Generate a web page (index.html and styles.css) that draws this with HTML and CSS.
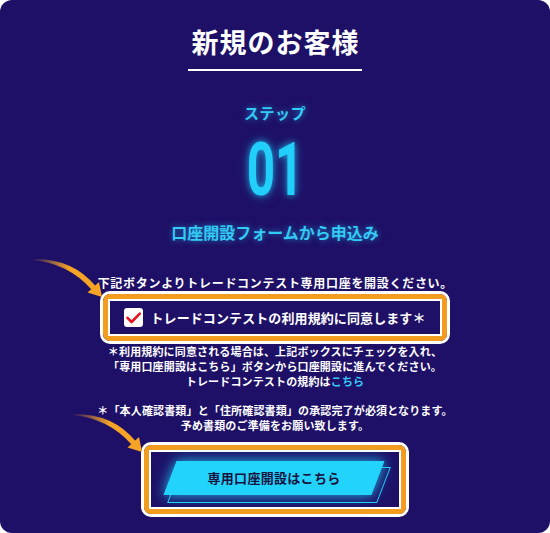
FILE: index.html
```html
<!DOCTYPE html>
<html lang="ja">
<head>
<meta charset="utf-8">
<title>新規のお客様</title>
<link rel="stylesheet" href="styles.css">
</head>
<body>
<div class="card">
  <h1 class="title">新規のお客様</h1>
  <div class="rule"></div>
  <p class="step-label">ステップ</p>
  <p class="step-num"><span>01</span></p>
  <p class="step-title">口座開設フォームから申込み</p>
  <p class="lead">下記ボタンよりトレードコンテスト専用口座を開設ください。</p>
  <div class="frame frame-agree">
    <div class="frame-orange">
      <div class="frame-inner agree">
        <span class="checkbox"><svg viewBox="0 0 19 19" width="19" height="19"><path d="M3.5 9.8 L7.6 14 L15.8 5.6" fill="none" stroke="#e8141f" stroke-width="2.6" stroke-linecap="round" stroke-linejoin="round"/></svg></span>
        <span class="agree-text">トレードコンテストの利用規約に同意します＊</span>
      </div>
    </div>
  </div>
  <p class="note">＊利用規約に同意される場合は、上記ボックスにチェックを入れ、<br>「専用口座開設はこちら」ボタンから口座開設に進んでください。<br>トレードコンテストの規約は<a class="link" href="#">こちら</a></p>
  <p class="note note-2">＊「本人確認書類」と「住所確認書類」の承認完了が必須となります。<br>予め書類のご準備をお願い致します。</p>
  <div class="frame frame-cta">
    <div class="frame-orange">
      <div class="frame-inner cta-wrap">
        <a class="cta" href="#"><span class="cta-text">専用口座開設はこちら</span></a>
      </div>
    </div>
  </div>

  <svg class="arrow arrow-1" viewBox="0 0 80 48" width="80" height="48">
    <defs>
      <linearGradient id="ag1" x1="0" y1="0" x2="1" y2="0">
        <stop offset="0" stop-color="#f6a326" stop-opacity="0"/>
        <stop offset="0.6" stop-color="#f6a326" stop-opacity="1"/>
      </linearGradient>
    </defs>
    <path d="M3 4 Q44 2.5 67.5 31 L63.5 34.5 Q40 8 3 4.8 Z" fill="url(#ag1)"/>
    <polygon points="74,42 59.5,37.5 71,27" fill="#f6a326"/>
  </svg>
  <svg class="arrow arrow-2" viewBox="0 0 80 48" width="80" height="48">
    <defs>
      <linearGradient id="ag2" x1="0" y1="0" x2="1" y2="0">
        <stop offset="0" stop-color="#f6a326" stop-opacity="0"/>
        <stop offset="0.6" stop-color="#f6a326" stop-opacity="1"/>
      </linearGradient>
    </defs>
    <path d="M3 4 Q44 2.5 67.5 31 L63.5 34.5 Q40 8 3 4.8 Z" fill="url(#ag2)"/>
    <polygon points="74,42 59.5,37.5 71,27" fill="#f6a326"/>
  </svg>
</div>
</body>
</html>
```

FILE: styles.css
```css
* { box-sizing: border-box; }
html, body { margin: 0; padding: 0; background: #ffffff; }
body {
  font-family: "Noto Sans CJK JP", "Noto Sans", sans-serif;
  font-weight: 700;
}
.card {
  position: relative;
  width: 550px;
  height: 533px;
  background: #1e1066;
  border-radius: 12px;
  overflow: hidden;
  display: flex;
  flex-direction: column;
  align-items: center;
  color: #ffffff;
}
.title {
  margin: 24px 0 0;
  font-size: 27px;
  line-height: 36px;
  font-weight: 700;
  letter-spacing: 1px;
  padding-left: 1px;
}
.rule {
  width: 174px;
  height: 2px;
  margin-top: 9px;
  background: #ffffff;
}
.step-label {
  margin: 32px 0 0;
  font-size: 15px;
  line-height: 20px;
  letter-spacing: 0.5px;
  color: #33caf5;
  text-shadow: 0 0 6px rgba(40, 200, 245, 0.6);
}
.step-num {
  margin: 16px 0 0;
  height: 60px;
  line-height: 60px;
  font-family: "Roboto", "Liberation Sans", sans-serif;
  font-size: 75px;
  font-weight: 700;
  color: #22cffa;
}
.step-num span {
  display: inline-block;
  transform: scaleX(0.66);
  text-shadow: 0 0 8px rgba(34, 207, 250, 0.75), 0 0 16px rgba(34, 207, 250, 0.35);
}
.step-title {
  margin: 22px 0 0;
  font-size: 16px;
  line-height: 22px;
  color: #33caf5;
  text-shadow: 0 0 6px rgba(40, 200, 245, 0.6);
}
.lead {
  margin: 32px 0 0;
  font-size: 12px;
  line-height: 16px;
  letter-spacing: 0.7px;
  padding-left: 0.7px;
}
.frame {
  border: 3px solid #ffffff;
  border-radius: 10px;
}
.frame-orange {
  border: 5px solid #f39d20;
  border-radius: 7px;
  background: #f39d20;
}
.frame-inner {
  border: 2px solid #ffffff;
  background: #1e1066;
}
.frame-agree { width: 350px; height: 53px; }
.frame-agree .frame-orange, .frame-cta .frame-orange { height: 100%; }
.agree {
  height: 100%;
  display: flex;
  align-items: center;
  justify-content: center;
  gap: 7px;
}
.checkbox {
  width: 19px;
  height: 19px;
  background: #ffffff;
  border-radius: 3px;
  display: flex;
}
.agree-text {
  font-size: 13px;
  line-height: 19px;
  letter-spacing: 0.1px;
}
.note {
  margin: 0;
  font-size: 11px;
  line-height: 15px;
  text-align: center;
  letter-spacing: 0.15px;
}
.note-2 { margin-top: 14px; }
.link { color: #33caf5; text-decoration: none; }
.frame-cta {
  width: 268px;
  height: 75px;
  margin-top: 9px;
}
.cta-wrap {
  height: 100%;
  display: flex;
  align-items: center;
  justify-content: center;
  padding-bottom: 4px;
  padding-right: 2px;
}
.cta {
  position: relative;
  width: 208px;
  height: 34px;
  display: flex;
  align-items: center;
  justify-content: center;
  text-decoration: none;
  z-index: 0;
}
.cta::before {
  content: "";
  position: absolute;
  inset: 0;
  background: #22d3fc;
  transform: skewX(-21deg);
  box-shadow: 0 0 10px rgba(34, 211, 252, 0.7), 0 0 20px rgba(34, 211, 252, 0.3);
  z-index: -1;
}
.cta::after {
  content: "";
  position: absolute;
  left: 4px;
  top: 6px;
  width: 100%;
  height: 100%;
  border: 1.5px solid #22d3fc;
  transform: skewX(-21deg);
  z-index: -2;
}
.cta-text {
  font-size: 13px;
  line-height: 20px;
  color: #18123e;
  letter-spacing: 0.3px;
}
.arrow {
  position: absolute;
}
.arrow-1 { left: 28px; top: 255px; }
.arrow-2 { left: 68px; top: 410px; }
```
